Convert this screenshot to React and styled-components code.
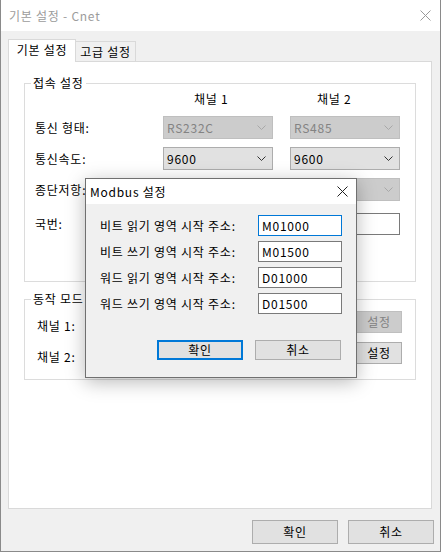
import React from "react";
import styled, { createGlobalStyle, css } from "styled-components";

const GlobalStyle = createGlobalStyle`
  html, body { margin: 0; padding: 0; background: #ffffff; }
  body {
    font-family: "Noto Sans CJK KR", "Noto Sans", sans-serif;
    font-size: 12px;
    letter-spacing: 0.75px;
    color: #000;
  }
  * { box-sizing: border-box; }
`;

const Window = styled.div`
  position: relative;
  width: 441px;
  height: 552px;
  border: 1px solid #8a8a8a;
  border-top: none;
  background: #f0f0f0;
  display: flex;
  flex-direction: column;
  overflow: hidden;
`;

const TitleBar = styled.div`
  height: ${(p) => p.$h}px;
  flex: none;
  background: #ffffff;
  display: flex;
  align-items: center;
  justify-content: space-between;
  padding: 0 ${(p) => p.$right}px 0 ${(p) => p.$left}px;
  color: ${(p) => p.$color};
  font-size: 12px;
  line-height: 16px;
`;

const CloseIcon = ({ color }) => (
  <svg width="11" height="11" viewBox="0 0 11 11">
    <path d="M0.5 0.5 L10.5 10.5 M10.5 0.5 L0.5 10.5" stroke={color} strokeWidth="1" fill="none" />
  </svg>
);

const Body = styled.div`
  flex: 1;
  display: flex;
  flex-direction: column;
  padding: 8px 8px 7px 7px;
  min-height: 0;
`;

const TabRow = styled.div`
  height: 22px;
  display: flex;
  align-items: flex-end;
  flex: none;
`;

const Tab = styled.div`
  position: relative;
  display: flex;
  align-items: center;
  justify-content: center;
  line-height: 16px;
  border: 1px solid #d9d9d9;
  ${(p) =>
    p.$active
      ? css`
          width: 68px;
          height: 23px;
          margin-bottom: -1px;
          background: #ffffff;
          border-bottom: none;
          z-index: 1;
          padding-bottom: 2px;
        `
      : css`
          width: 60px;
          height: 20px;
          background: #f0f0f0;
          border-left: none;
          border-bottom: none;
        `}
`;

const Panel = styled.div`
  flex: 1;
  background: #ffffff;
  border: 1px solid #d9d9d9;
  padding: 0 15px;
  display: flex;
  flex-direction: column;
`;

const Group = styled.div`
  position: relative;
  margin-top: ${(p) => p.$mt}px;
  padding: ${(p) => p.$pt}px ${(p) => p.$pr}px ${(p) => p.$pb}px ${(p) => p.$pl}px;
  border: 1px solid #dcdcdc;
`;

const Legend = styled.span`
  position: absolute;
  top: -9px;
  left: 6px;
  padding: 0 2px;
  background: #ffffff;
  line-height: 16px;
  white-space: nowrap;
`;

const GridRow = styled.div`
  display: grid;
  grid-template-columns: 111px 110px 110px;
  column-gap: 17px;
  align-items: center;
  margin-top: ${(p) => p.$mt || 0}px;
  height: ${(p) => p.$h}px;
`;

const Label = styled.div`
  line-height: 16px;
  white-space: nowrap;
`;

const Header = styled.div`
  line-height: 16px;
  padding-left: ${(p) => p.$pl}px;
`;

const ComboBox = styled.div`
  height: ${(p) => p.$h || 23}px;
  display: flex;
  align-items: center;
  justify-content: space-between;
  padding: 0 6px 0 3px;
  line-height: 16px;
  border: 1px solid ${(p) => (p.$disabled ? "#bfbfbf" : "#adadad")};
  background: ${(p) => (p.$disabled ? "#cccccc" : "#e1e1e1")};
  color: ${(p) => (p.$disabled ? "#838383" : "#000")};
`;

const Chevron = ({ color }) => (
  <svg width="9" height="5" viewBox="0 0 9 5">
    <polyline points="0.5,0.5 4.5,4.5 8.5,0.5" stroke={color} strokeWidth="1" fill="none" />
  </svg>
);

const Combo = ({ value, disabled, h }) => (
  <ComboBox $disabled={disabled} $h={h}>
    <span>{value}</span>
    <Chevron color={disabled ? "#a8a8a8" : "#333"} />
  </ComboBox>
);

const TextInput = styled.div`
  height: ${(p) => p.$h}px;
  background: #ffffff;
  border: 1px solid ${(p) => (p.$focused ? "#0078d7" : "#7a7a7a")};
  padding: 0 3px;
  display: flex;
  align-items: center;
  line-height: 16px;
`;

const ModeRow = styled.div`
  display: flex;
  justify-content: space-between;
  align-items: flex-start;
  height: 22px;
  margin-top: ${(p) => p.$mt}px;
`;

const ModeLabel = styled.div`
  line-height: 16px;
  margin-top: 7px;
`;

const Button = styled.div`
  width: ${(p) => p.$w}px;
  height: ${(p) => p.$h}px;
  display: flex;
  align-items: center;
  justify-content: center;
  line-height: 16px;
  background: ${(p) => (p.$disabled ? "#cccccc" : "#e1e1e1")};
  color: ${(p) => (p.$disabled ? "#838383" : "#000")};
  border: ${(p) => (p.$default ? "2px solid #0078d7" : `1px solid ${p.$disabled ? "#bfbfbf" : "#adadad"}`)};
`;

const Footer = styled.div`
  flex: none;
  display: flex;
  justify-content: flex-end;
  gap: 10px;
  margin-top: 11px;
  margin-right: -2px;
`;

const Dialog = styled.div`
  position: absolute;
  left: 84px;
  top: 178px;
  width: 272px;
  height: 200px;
  border: 1px solid #707070;
  background: #f0f0f0;
  box-shadow: 0 4px 18px rgba(0, 0, 0, 0.28);
  display: flex;
  flex-direction: column;
  z-index: 5;
`;

const DialogBody = styled.div`
  padding: 11px 14px 0 14px;
  display: flex;
  flex-direction: column;
  gap: 5px;
`;

const FieldRow = styled.div`
  display: grid;
  grid-template-columns: 1fr 84px;
  align-items: center;
  height: 21px;
`;

const DialogButtons = styled.div`
  display: flex;
  justify-content: flex-end;
  gap: 12px;
  margin-top: 21px;
  margin-right: 1px;
`;

const fields = [
  ["비트 읽기 영역 시작 주소:", "M01000"],
  ["비트 쓰기 영역 시작 주소:", "M01500"],
  ["워드 읽기 영역 시작 주소:", "D01000"],
  ["워드 쓰기 영역 시작 주소:", "D01500"],
];

export default function App() {
  return (
    <>
      <GlobalStyle />
      <Window>
        <TitleBar $h={31} $left={8} $right={9} $color="#9c9c9c">
          <span>기본 설정 - Cnet</span>
          <CloseIcon color="#9a9a9a" />
        </TitleBar>
        <Body>
          <TabRow>
            <Tab $active>기본 설정</Tab>
            <Tab>고급 설정</Tab>
          </TabRow>
          <Panel>
            <Group $mt={21} $pt={7} $pl={10} $pr={14} $pb={46}>
              <Legend>접속 설정</Legend>
              <GridRow $h={16}>
                <span />
                <Header $pl={31}>채널 1</Header>
                <Header $pl={27}>채널 2</Header>
              </GridRow>
              <GridRow $h={23} $mt={9}>
                <Label>통신 형태:</Label>
                <Combo value="RS232C" disabled />
                <Combo value="RS485" disabled />
              </GridRow>
              <GridRow $h={23} $mt={8}>
                <Label>통신속도:</Label>
                <Combo value="9600" />
                <Combo value="9600" />
              </GridRow>
              <GridRow $h={23} $mt={8}>
                <Label>종단저항:</Label>
                <Combo value="" disabled />
                <Combo value="" disabled />
              </GridRow>
              <GridRow $h={22} $mt={12}>
                <Label>국번:</Label>
                <TextInput $h={22} />
                <TextInput $h={22} />
              </GridRow>
            </Group>
            <Group $mt={17} $pt={11} $pl={12} $pr={13} $pb={15}>
              <Legend>동작 모드</Legend>
              <ModeRow $mt={0}>
                <ModeLabel>채널 1:</ModeLabel>
                <Button $w={46} $h={22} $disabled>설정</Button>
              </ModeRow>
              <ModeRow $mt={9}>
                <ModeLabel>채널 2:</ModeLabel>
                <Button $w={46} $h={22}>설정</Button>
              </ModeRow>
            </Group>
          </Panel>
          <Footer>
            <Button $w={86} $h={24}>확인</Button>
            <Button $w={86} $h={24}>취소</Button>
          </Footer>
        </Body>

        <Dialog>
          <TitleBar $h={25} $left={4} $right={8} $color="#000">
            <span>Modbus 설정</span>
            <CloseIcon color="#222" />
          </TitleBar>
          <DialogBody>
            {fields.map(([label, value], i) => (
              <FieldRow key={label}>
                <Label>{label}</Label>
                <TextInput $h={21} $focused={i === 0}>{value}</TextInput>
              </FieldRow>
            ))}
            <DialogButtons>
              <Button $w={86} $h={20} $default>확인</Button>
              <Button $w={86} $h={20}>취소</Button>
            </DialogButtons>
          </DialogBody>
        </Dialog>
      </Window>
    </>
  );
}
